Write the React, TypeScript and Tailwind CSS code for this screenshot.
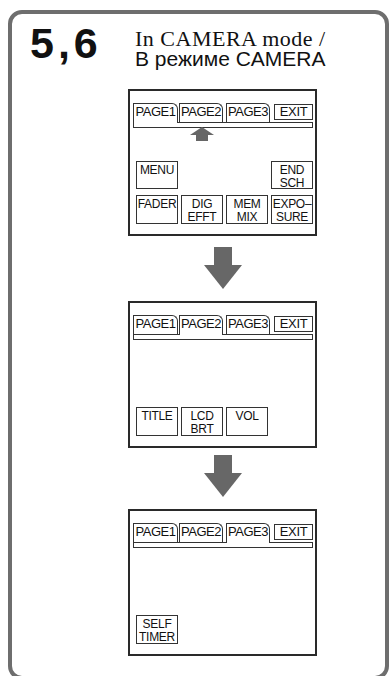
import React from "react";

const sans = "font-['Liberation_Sans',Arial,sans-serif]";

const Tab: React.FC<{ label: string; active?: boolean; className: string }> = ({
  label,
  active,
  className,
}) => (
  <div
    className={`flex justify-center border-l border-t border-r border-[#333] rounded-tr-[6px] bg-white pt-[1px] text-[13px] leading-[14px] tracking-[-0.5px] text-[#111] ${
      active ? "relative z-10 h-[20px] -mb-[1px]" : "h-[19px]"
    } ${className}`}
  >
    {label}
  </div>
);

const Tabs: React.FC<{ active: number }> = ({ active }) => (
  <div className="pl-[3px] pr-[2px] pt-[12px]">
    <div className="flex items-end">
      <Tab label="PAGE1" active={active === 1} className="w-[45px]" />
      <Tab label="PAGE2" active={active === 2} className="ml-[1px] w-[44px]" />
      <Tab label="PAGE3" active={active === 3} className="ml-[3px] w-[44px]" />
      <div className="mb-[2px] ml-[4px] flex h-[16px] w-[39px] justify-center border border-[#333] text-[13px] leading-[14px] tracking-[-0.3px] text-[#111]">
        EXIT
      </div>
    </div>
    <div className="h-[6px] w-[180px] border border-[#333]" />
  </div>
);

const Btn: React.FC<{ lines: string[]; className?: string }> = ({ lines, className = "h-[29px]" }) => (
  <div
    className={`flex w-[42px] flex-col items-center border border-[#333] pt-[2px] text-[12px] leading-[13px] tracking-[-0.3px] text-[#111] ${className}`}
  >
    {lines.map((l) => (
      <span key={l}>{l}</span>
    ))}
  </div>
);

const Screen: React.FC<{ active: number; children: React.ReactNode; pointer?: boolean }> = ({
  active,
  children,
  pointer,
}) => (
  <div className={`flex h-[147px] w-[189px] flex-col border-2 border-[#2a2a2a] bg-white ${sans}`}>
    <Tabs active={active} />
    {pointer && (
      <div className="pl-[60px]">
        <svg width="24" height="14" viewBox="0 0 24 14" className="-mt-[1px]">
          <polygon points="12,0 24,8 18,8 18,14 6,14 6,8 0,8" fill="#666" />
        </svg>
      </div>
    )}
    <div className="mt-auto flex flex-col gap-[6px] pb-[10px] pl-[6px] pr-[2px]">{children}</div>
  </div>
);

const DownArrow: React.FC<{ className: string }> = ({ className }) => (
  <div className={`flex w-[189px] justify-center ${className}`}>
    <svg width="38" height="42" viewBox="0 0 38 42">
      <rect x="10" y="0" width="18" height="19" fill="#676767" />
      <polygon points="0,18 38,18 19,42" fill="#676767" />
    </svg>
  </div>
);

export default function App() {
  return (
    <div className="h-[676px] w-[389px] overflow-hidden bg-white pl-[8px] pt-[10px]">
      <div className="flex h-[670px] w-[381px] rounded-[14px] border-4 border-[#6e6e6e] pl-[18px]">
        <div className="w-[98px] shrink-0">
          <div className={`mt-[8px] text-[43px] font-bold leading-[42px] tracking-[4px] text-[#111] ${sans}`}>
            5,6
          </div>
        </div>
        <div className="flex flex-col pt-[14px]">
          <div className="pl-[7px] text-[#111]">
            <div className="font-['Liberation_Serif','Times_New_Roman',serif] text-[22px] leading-[21px] tracking-[0.5px]">
              In CAMERA mode /
            </div>
            <div className={`text-[21px] leading-[20px] ${sans}`}>В режиме CAMERA</div>
          </div>

          <div className="mt-[20px]">
            <Screen active={1} pointer>
              <div className="flex justify-between">
                <Btn lines={["MENU"]} className="h-[28px]" />
                <Btn lines={["END", "SCH"]} className="h-[28px]" />
              </div>
              <div className="flex gap-[3px]">
                <Btn lines={["FADER"]} />
                <Btn lines={["DIG", "EFFT"]} />
                <Btn lines={["MEM", "MIX"]} />
                <Btn lines={["EXPO–", "SURE"]} />
              </div>
            </Screen>
          </div>

          <DownArrow className="mt-[11px]" />

          <div className="mt-[12px]">
            <Screen active={2}>
              <div className="flex gap-[3px]">
                <Btn lines={["TITLE"]} />
                <Btn lines={["LCD", "BRT"]} />
                <Btn lines={["VOL"]} />
              </div>
            </Screen>
          </div>

          <DownArrow className="mt-[7px]" />

          <div className="mt-[12px]">
            <Screen active={3}>
              <div className="flex">
                <Btn lines={["SELF", "TIMER"]} />
              </div>
            </Screen>
          </div>
        </div>
      </div>
    </div>
  );
}
